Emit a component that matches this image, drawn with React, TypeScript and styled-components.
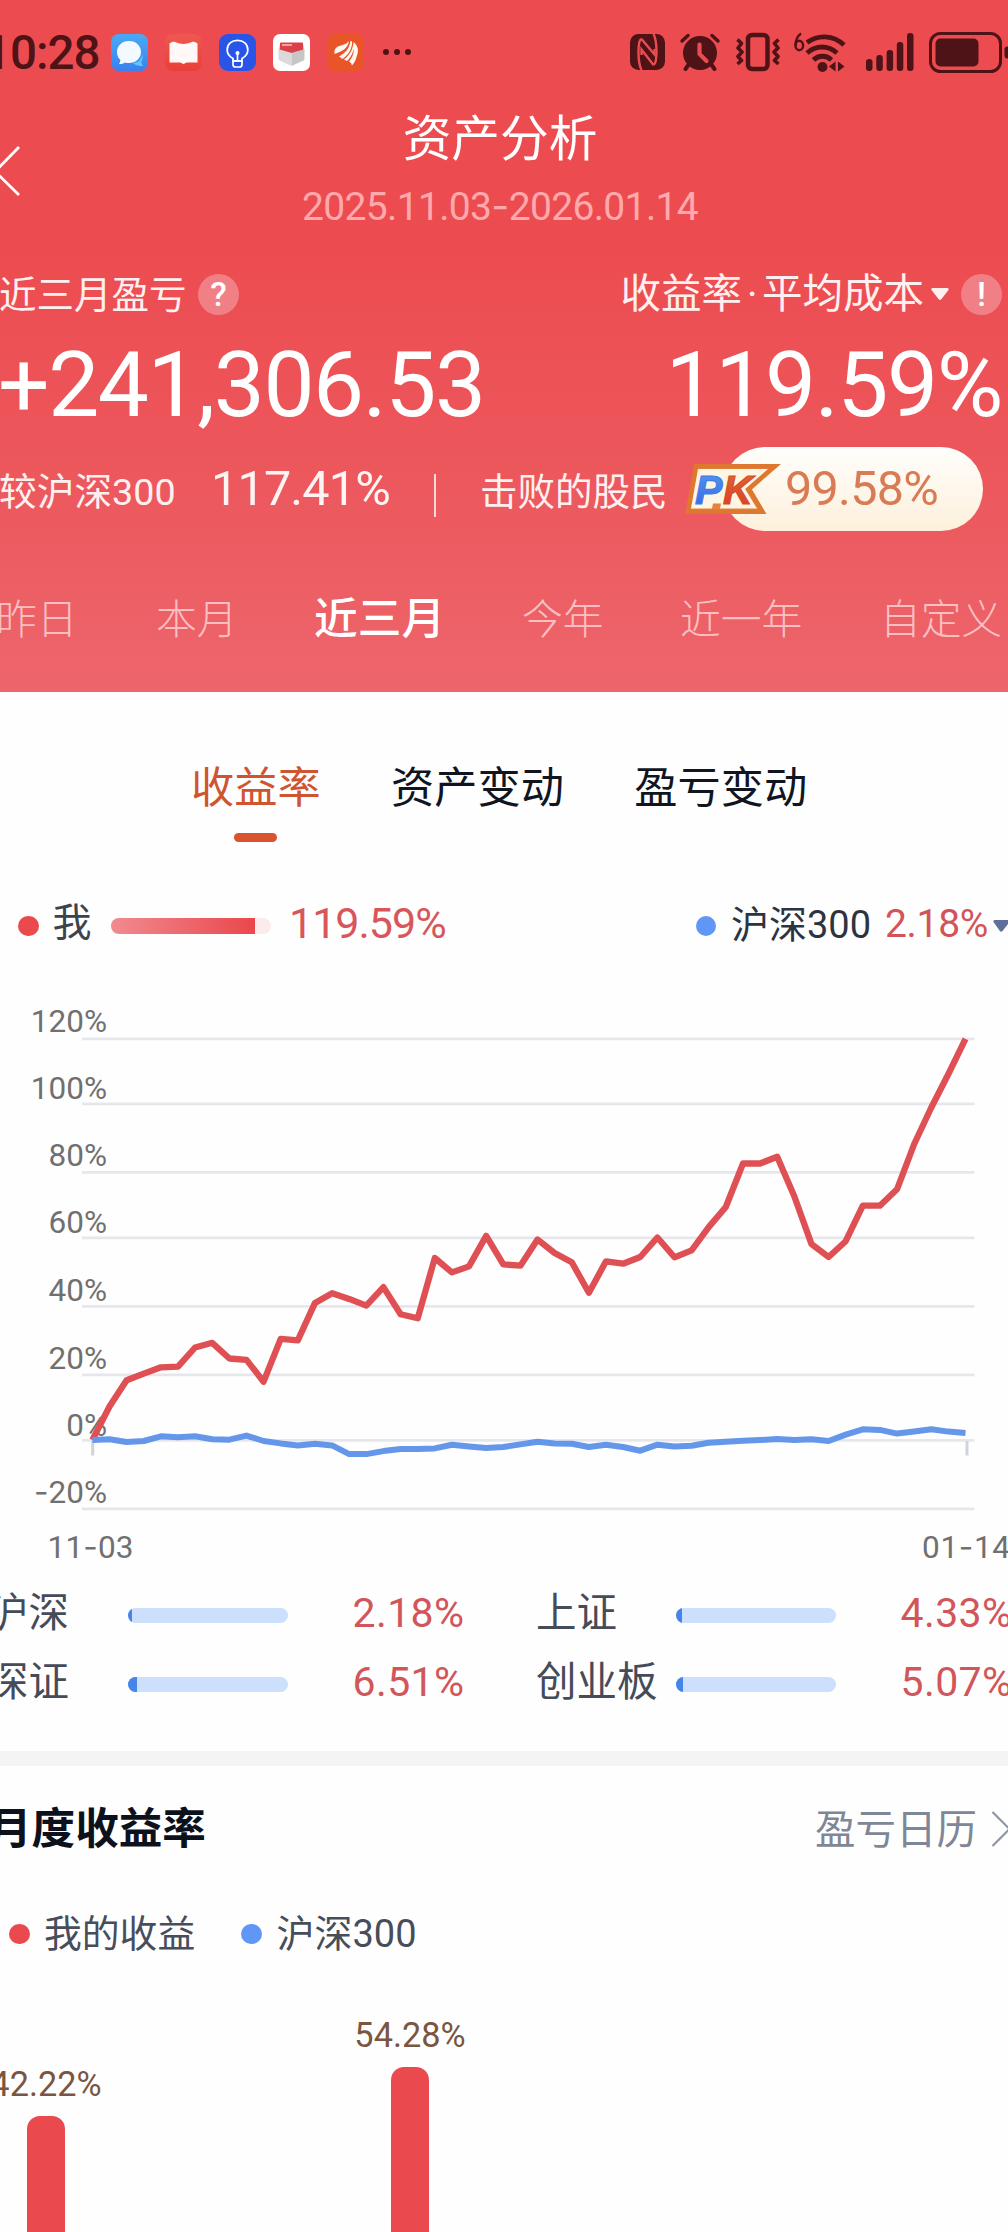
import React from "react";
import styled, { createGlobalStyle } from "styled-components";

const INK = "#4d1317";
const RED = "#ea4a4e";
const BLUE = "#6097f7";
const HEADER_TOP = "#ec4c50";

const GlobalStyle = createGlobalStyle`
  html, body { margin: 0; padding: 0; background: #fefefe; }
  * { box-sizing: border-box; }
`;

const Page = styled.main`
  width: 1008px;
  height: 2232px;
  overflow: hidden;
  background: #fefefe;
  font-family: Roboto, "Noto Sans CJK SC", sans-serif;
  white-space: nowrap;
`;

const Row = styled.div<{ $h: number }>`
  display: flex;
  align-items: center;
  height: ${(p) => p.$h}px;
`;

type TextProps = {
  $size: number;
  $w?: number;
  $color?: string;
  $weight?: number;
  $ls?: number;
  $ml?: number;
  $drop?: number;
  $lift?: number;
};

const Text = styled.span<TextProps>`
  flex: none;
  display: block;
  width: ${(p) => (p.$w ? `${p.$w}px` : "auto")};
  margin-left: ${(p) => p.$ml ?? 0}px;
  padding-top: ${(p) => p.$drop ?? 0}px;
  padding-bottom: ${(p) => p.$lift ?? 0}px;
  font-size: ${(p) => p.$size}px;
  line-height: 60px;
  font-weight: ${(p) => p.$weight ?? 400};
  letter-spacing: ${(p) => p.$ls ?? 0}px;
  color: ${(p) => p.$color ?? "inherit"};
`;

/* ---------- header ---------- */

const Header = styled.header`
  height: 692px;
  color: #fff;
  background: linear-gradient(180deg, ${HEADER_TOP} 0, #ec4c50 250px, #ec5a5f 520px, #ed666c 692px);
`;

const AppIcons = styled.div`
  display: flex;
  gap: 17px;
  margin-left: 13px;
`;

const StatusIcons = styled.div`
  display: flex;
  align-items: center;
  margin-left: auto;
  width: 378px;
  flex: none;
`;

const Glyph = styled.svg<{ $ml?: number }>`
  flex: none;
  display: block;
  overflow: visible;
  margin-left: ${(p) => p.$ml ?? 0}px;
`;

const Nav = styled.nav`
  display: flex;
  height: 146px;
  padding-right: 28px;
`;

const Back = styled.button`
  width: 20px;
  padding: 42px 0 0;
  border: 0;
  background: none;
  display: flex;
  align-items: flex-start;
`;

const TitleBlock = styled.div`
  flex: 1;
  display: flex;
  flex-direction: column;
  align-items: center;
  padding-top: 4px;
`;

const Title = styled.h1`
  margin: 0;
  font-size: 48.7px;
  font-weight: 400;
  line-height: 64px;
`;

const DateRange = styled.div`
  margin-top: 14px;
  font-size: 39px;
  line-height: 40px;
  letter-spacing: -0.65px;
  color: #ffa9ad;
`;

const Hyphen = styled.span`
  font-family: Inter, sans-serif;
`;

const Round = styled.span<{ $ml: number }>`
  flex: none;
  display: flex;
  align-items: center;
  justify-content: center;
  width: 41px;
  height: 41px;
  margin-left: ${(p) => p.$ml}px;
  border-radius: 50%;
  background: #f08085;
  font-size: 34px;
  line-height: 41px;
  font-weight: 500;
`;

const Push = styled.div<{ $pr: number }>`
  display: flex;
  align-items: center;
  margin-left: auto;
  padding-right: ${(p) => p.$pr}px;
`;

const Divider = styled.i`
  flex: none;
  width: 2px;
  height: 43px;
  margin: 13px 0 0 42px;
  background: #fbd9da;
`;

const Pill = styled.div`
  position: relative;
  flex: none;
  width: 260px;
  height: 84px;
  margin-left: 54px;
  padding: 12px 0 0 62px;
  border-radius: 42px;
  background: linear-gradient(180deg, #fffefb, #fdf0dc);
`;

const PkBadge = styled.svg`
  position: absolute;
  left: -38px;
  top: 17px;
  overflow: visible;
`;

/* ---------- body ---------- */

const SectionTabs = styled.div`
  display: flex;
  gap: 70.5px;
  padding: 67px 0 0 191px;
  height: 150px;
`;

const SectionTab = styled.div<{ $active?: boolean }>`
  display: flex;
  flex-direction: column;
  align-items: center;
  gap: 14px;
  font-size: 43.2px;
  line-height: 60px;
  color: ${(p) => (p.$active ? "#cf5430" : "#10151f")};
  &::after {
    content: "";
    width: 43px;
    height: 9px;
    border-radius: 5px;
    background: ${(p) => (p.$active ? "#d95330" : "transparent")};
  }
`;

const Dot = styled.i<{ $color: string; $ml: number }>`
  flex: none;
  width: 20.5px;
  height: 20.5px;
  margin-left: ${(p) => p.$ml}px;
  border-radius: 50%;
  background: ${(p) => p.$color};
`;

const Meter = styled.div<{ $track: string; $ml?: number; $h: number }>`
  flex: none;
  overflow: hidden;
  width: 160px;
  height: ${(p) => p.$h}px;
  margin-left: ${(p) => p.$ml ?? 0}px;
  border-radius: 8px;
  background: ${(p) => p.$track};
`;

const Fill = styled.div<{ $bg: string }>`
  height: 100%;
  background: ${(p) => p.$bg};
`;

const IndexGrid = styled.div`
  display: grid;
  grid-template-columns: 548px 548px;
  grid-template-rows: 70px 68px;
  align-items: center;
  height: 171px;
  margin-left: -12px;
`;

const IndexItem = styled.div`
  display: flex;
  align-items: center;
`;

const Band = styled.hr`
  height: 15px;
  margin: 0;
  border: 0;
  background: #f4f4f4;
`;

const Bars = styled.div`
  display: flex;
  align-items: flex-end;
  height: 254px;
  gap: 240px;
  margin-left: -16px;
`;

const BarColumn = styled.div`
  flex: none;
  display: flex;
  flex-direction: column;
  align-items: center;
  width: 124px;
  font-size: 34.3px;
  line-height: 40px;
  color: #7a5541;
`;

const Bar = styled.div`
  width: 38px;
  margin-top: 12px;
  border-radius: 13px 13px 0 0;
  background: ${RED};
`;

/* ---------- data ---------- */

const periods = [
  { label: "昨日", w: 160, ml: -4 },
  { label: "本月", w: 158, ml: 0 },
  { label: "近三月", w: 208, ml: 0, active: true },
  { label: "今年", w: 158, ml: 0 },
  { label: "近一年", w: 200, ml: 0 },
  { label: "自定义", w: 124, ml: 0 },
];

const indexes = [
  { label: "沪深", value: "2.18%", fill: 2.2 },
  { label: "上证", value: "4.33%", fill: 4 },
  { label: "深证", value: "6.51%", fill: 5.6 },
  { label: "创业板", value: "5.07%", fill: 4.6 },
];

const months = [
  { value: "42.22%", height: 116 },
  { value: "54.28%", height: 165 },
];

const grid = [
  { label: "120%", line: 28.9, base: 21.6 },
  { label: "100%", line: 93.9, base: 88.6 },
  { label: "80%", line: 162.4, base: 155.9 },
  { label: "60%", line: 227.9, base: 222.9 },
  { label: "40%", line: 296.4, base: 291.4 },
  { label: "20%", line: 364.9, base: 358.8 },
  { label: "0%", line: 430.3, base: 425.7 },
  { label: "-20%", line: 498.8, base: 492.7 },
];

const mine = [
  0, 10, 17.8, 19.8, 21.7, 21.9, 27.6, 29, 24.3, 23.9, 17.4, 30.2, 29.7, 40.9, 43.8, 42.1, 40.1, 45.6,
  37.5, 36.3, 54.3, 50, 51.8, 60.9, 52.4, 52, 59.8, 55.8, 53, 43.9, 53.3, 52.6, 54.6, 60.4, 54.5, 56.6,
  63.5, 69.5, 82.5, 82.5, 84.5, 72.7, 58.5, 54.6, 59.3, 69.9, 69.9, 74.8, 88.3, 99.2, 109.2, 119.7,
];

const benchmark = [
  0, 0.2, -0.6, -0.3, 1.1, 0.8, 1.1, 0.2, 0.1, 1.3, -0.3, -1, -1.6, -1.1, -1.6, -4.2, -4.2, -3.3, -2.7,
  -2.7, -2.5, -1.4, -1.9, -2.4, -2.1, -1.3, -0.5, -1, -1.1, -2.1, -1.4, -2.1, -3.2, -1.4, -1.9, -1.7,
  -0.8, -0.5, -0.2, 0, 0.3, 0, 0.2, -0.3, 1.6, 3.2, 3, 1.9, 2.5, 3.2, 2.5, 2.1,
];

const plot = (values: number[]) =>
  values.map((v, i) => `${(92.4 + i * 17.12).toFixed(1)},${(430 - v * 3.352).toFixed(1)}`).join(" ");

/* ---------- pieces ---------- */

function StatusBar() {
  return (
    <Row $h={104}>
      <Text $size={47.5} $weight={500} $color={INK} $ls={-1} $w={114} $ml={-16} $drop={2}>10:28</Text>
      <AppIcons>
        <Glyph width="37" height="37" viewBox="0 0 37 37">
          <defs>
            <linearGradient id="msg" x2="0" y2="1"><stop stopColor="#4aaaf4" /><stop offset="1" stopColor="#3b80ee" /></linearGradient>
          </defs>
          <rect width="37" height="37" rx="8" fill="url(#msg)" />
          <path d="M22 29c5 0 9-4 9-9 1 3 1 6-1 8l2 4c-4 0-7 0-10-3z" fill="#5bc8f8" />
          <path d="M18 7c7 0 12 4.800 12 11s-5 11-12 11c-2 0-3 0-4-.6-1.500 1-3.500 1.600-6 1.600 1-1.500 1.400-3 1.300-4.300C7 23.700 6 21.400 6 18 6 11.800 11 7 18 7z" fill="#f2faff" />
        </Glyph>
        <Glyph width="37" height="37" viewBox="0 0 37 37">
          <defs>
            <linearGradient id="book" x2="0" y2="1"><stop stopColor="#ee5850" /><stop offset="1" stopColor="#e93f38" /></linearGradient>
          </defs>
          <rect width="37" height="37" rx="8" fill="url(#book)" />
          <path d="M4.500 9.500L7 8c4-.8 5 2 11.500 2S26 7.200 30 8l2.500 1.500v19H22c-1.500 0-2.500 1.500-3.500 1.500s-2-1.500-3.500-1.500H4.500z" fill="#fff8f7" />
        </Glyph>
        <Glyph width="37" height="37" viewBox="0 0 37 37" fill="none" stroke="#fff" strokeWidth="1.700">
          <rect width="37" height="37" rx="9" fill="#2855e8" stroke="none" />
          <path d="M14 27v-2.500c-3.500-2-5.800-5-5.800-8.600C8.200 10 12.600 6.300 18.500 6.300S28.800 10 28.800 15.900c0 3.600-2.300 6.600-5.800 8.600V27z" />
          <path d="M14 27h9v3.500c0 1.500-1 2.500-2.500 2.500h-4c-1.500 0-2.500-1-2.500-2.500zM18.500 27v-8" />
          <circle cx="18.500" cy="19" r="2" fill="#fff" stroke="none" />
        </Glyph>
        <Glyph width="37" height="37" viewBox="0 0 37 37">
          <rect width="37" height="37" rx="7" fill="#fff" />
          <path d="M5.500 15l13 4v13l-12-5.500c-1-.5-1-1-1-2z" fill="#dadada" />
          <path d="M31.500 15l-13 4v13l12-5.500c1-.5 1-1 1-2z" fill="#c6c6c6" />
          <path d="M8 8.500h21c.8 0 1 .5 1 1l.5 6-12 3.500-12-3.500.5-6c0-.5.400-1 1-1z" fill="#dd4148" />
          <path d="M9 11h10" stroke="#f6c0c2" strokeWidth="1.500" />
        </Glyph>
        <Glyph width="37" height="37" viewBox="0 0 37 37" fill="#fff8f0">
          <rect width="37" height="37" rx="8" fill="#e95428" />
          <path d="M7.500 20C7 16.500 8 14 11 12.500c4-1.500 8-2 11-5.500-1 6-5 10-14.500 13z" />
          <path d="M12 22.500C19 18.500 22.500 14 23.500 7l1.500.3C25.500 14 22 20.500 15.500 25z" />
          <path d="M17 25.500C23 21 26 15 26.500 8c5 4 5.500 9 3 15-1 3.500-2 5.500-4.500 8.500-.5-2-1.500-3-3-3.700 3-4 5-8 5-13-1.500 5-3.500 9-7 12.200z" />
        </Glyph>
      </AppIcons>
      <Glyph $ml={19} width="28" height="6" viewBox="0 0 28 6" fill={INK}>
        <circle cx="3" cy="3" r="3" /><circle cx="14" cy="3" r="3" /><circle cx="25" cy="3" r="3" />
      </Glyph>
      <StatusIcons>
        <Glyph width="35" height="36" viewBox="0 0 35 36">
          <rect width="35" height="36" rx="8.500" fill={INK} />
          <g fill="none" stroke={HEADER_TOP} strokeWidth="2.400">
            <path d="M11.500 5C7.500 6 7.500 28 11.500 36M23.500 0c4 8 4 29 0 31" />
            <path d="M11.500 5L24.500 20.500V15M23.500 31L11.500 15.500V21" />
          </g>
        </Glyph>
        <Glyph $ml={15} width="40" height="38" viewBox="0 0 40 38" fill="none" stroke={INK} strokeLinecap="round">
          <circle cx="20" cy="20" r="17" fill={INK} stroke="none" />
          <path d="M2 8l6-5.500M38 8l-6-5.500" strokeWidth="3.500" />
          <path d="M9 31l-3.500 5M31 31l3.500 5" strokeWidth="4" />
          <path d="M19.500 11.500V21l7 7" stroke={HEADER_TOP} strokeWidth="4.200" />
        </Glyph>
        <Glyph $ml={15} width="46" height="38" viewBox="0 0 46 38" fill="none" stroke={INK} strokeWidth="4">
          <rect x="13" y="2" width="19.500" height="34" rx="4" strokeWidth="4.500" />
          <path d="M2.500 6.500l4 4-3.500 4.500 4 4-4 4.500 3.500 4-4 3.500M43.500 6.500l-4 4 3.500 4.500-4 4 4 4.500-3.500 4 4 3.500" strokeWidth="3.600" strokeLinejoin="round" />
        </Glyph>
        <Glyph $ml={13} width="52" height="39" viewBox="0 0 52 39" fill="none" stroke={INK}>
          <path d="M7 0.500C3.500 3 1.500 8 1.500 13" strokeWidth="2.400" />
          <ellipse cx="5.300" cy="12.500" rx="3.800" ry="4.700" strokeWidth="2.400" />
          <path d="M13 9.500c11-8 26-8 37 2.500M13 20c9-8 21-8 30 0M19.500 27c5-5 13-5 18 0" strokeWidth="4.800" />
          <circle cx="28.500" cy="34" r="5" fill={INK} stroke="none" />
          <path d="M41.500 28.500v10l-6.500-5zM44 28.500v10l6.500-5z" fill={INK} stroke="none" />
        </Glyph>
        <Glyph $ml={20} width="48" height="38" viewBox="0 0 48 38" fill={INK}>
          <rect x="0" y="26" width="6.500" height="12" rx="3" />
          <rect x="10.300" y="22" width="6.500" height="16" rx="3" />
          <rect x="20.600" y="17" width="6.500" height="21" rx="3" />
          <rect x="30.800" y="9" width="6.500" height="29" rx="3" />
          <rect x="41" y="0" width="6.500" height="38" rx="3" />
        </Glyph>
        <Glyph $ml={15} width="80" height="41" viewBox="0 0 80 41" fill={INK}>
          <rect x="1.500" y="1.500" width="70" height="38" rx="10" fill="none" stroke={INK} strokeWidth="3" />
          <rect x="6.500" y="6.500" width="43" height="28" rx="5" />
          <rect x="75.500" y="14.500" width="6" height="12" rx="3" />
        </Glyph>
      </StatusIcons>
    </Row>
  );
}

function Badge() {
  return (
    <PkBadge width="97" height="50" viewBox="0 0 97 50">
      <defs>
        <linearGradient id="pkB" x2="0" y2="1"><stop stopColor="#559af0" /><stop offset="1" stopColor="#3566e2" /></linearGradient>
        <linearGradient id="pkR" x2="0" y2="1"><stop stopColor="#d9712f" /><stop offset="1" stopColor="#dc3826" /></linearGradient>
      </defs>
      <path d="M11 2.200H90L64 25l13.500 22.700H3z" fill="#e4833c" stroke="#de7831" strokeWidth="4.500" />
      <g fontFamily="'Liberation Sans', sans-serif" fontSize="41" fontWeight="700" fontStyle="italic">
        <path d="M13 5H83L60 25l12 19.500H35l1-5h-8l-1 5H6z" fill="#fef6e4" />
        <text x="10" y="39.500" fill="url(#pkB)" stroke="#447be8" strokeWidth="1.200">P</text>
        <text x="38" y="39.500" fill="url(#pkR)" stroke="#d94a2a" strokeWidth="1.200">K</text>
      </g>
    </PkBadge>
  );
}

function ReturnChart() {
  return (
    <Glyph width="1008" height="570" viewBox="0 0 1008 570">
      {grid.map((g) => (
        <line key={g.label} x1="82" x2="974.500" y1={g.line} y2={g.line} stroke="#e6e7ec" strokeWidth="2.800" />
      ))}
      <g fill="#707070" fontSize="31.500" textAnchor="end">
        {grid.map((g) => (
          <text key={g.label} x="107" y={g.base}>
            {g.label.startsWith("-") ? <><tspan fontFamily="Inter">-</tspan>{g.label.slice(1)}</> : g.label}
          </text>
        ))}
      </g>
      <path d="M92.700 431v14.500M967 431v14.500" stroke="#cfd3da" strokeWidth="3" />
      <g fill="none" strokeLinejoin="round">
        <polyline points={plot(mine)} stroke="#df5054" strokeWidth="6.300" />
        <polyline points={plot(benchmark)} stroke="#6496ea" strokeWidth="6" />
      </g>
      <g fill="#707070" fontSize="31.500">
        <text x="47.500" y="547.800" textLength="86">11<tspan fontFamily="Inter">-</tspan>03</text>
        <text x="922" y="547.800" textLength="88">01<tspan fontFamily="Inter">-</tspan>14</text>
      </g>
    </Glyph>
  );
}

export default function App() {
  return (
    <Page>
      <GlobalStyle />
      <Header>
        <StatusBar />
        <Nav>
          <Back aria-label="返回">
            <Glyph width="20" height="50" viewBox="0 0 20 50" fill="none" stroke="#fff" strokeWidth="2.800">
              <path d="M19 1L-5 25.500L19 49" />
            </Glyph>
          </Back>
          <TitleBlock>
            <Title>资产分析</Title>
            <DateRange>2025.11.03<Hyphen>-</Hyphen>2026.01.14</DateRange>
          </TitleBlock>
        </Nav>
        <Row $h={88}>
          <Text $size={37.5} $w={187} $ml={-1} $drop={2} $color="#fff0f0">近三月盈亏</Text>
          <Round $ml={12}>?</Round>
          <Push $pr={6}>
            <Text $size={40.5} $color="#fff0f0">收益率</Text>
            <Text $size={40.5} $w={15} $ml={5} $color="#fff0f0">·</Text>
            <Text $size={40.5} $color="#fff0f0">平均成本</Text>
            <Glyph $ml={7} width="18" height="12" viewBox="0 0 18 12" fill="#fff0f0">
              <path d="M1.500 0h15c1 0 1.500 1 1 2l-7 9c-1 1.300-2 1.300-3 0l-7-9c-.5-1 0-2 1-2z" />
            </Glyph>
            <Round $ml={12}>!</Round>
          </Push>
        </Row>
        <Row $h={91}>
          <Text $size={91} $ls={-1.45} $ml={-2} $drop={2}>+241,306.53</Text>
          <Push $pr={6}><Text $size={91} $ls={-1.4} $drop={2}>119.59%</Text></Push>
        </Row>
        <Row $h={120}>
          <Text $size={37.7} $w={212} $ml={-1} $drop={5} $color="#fff0f0">较沪深300</Text>
          <Text $size={48.5} $w={181} $ls={-0.8} $color="#fff4f4">117.41%</Text>
          <Divider />
          <Text $size={37.5} $w={189} $ml={44} $drop={5} $color="#fff0f0">击败的股民</Text>
          <Pill>
            <Badge />
            <Text $size={48.5} $ls={-0.7} $color="#d97b55">99.58%</Text>
          </Pill>
        </Row>
        <Row $h={143}>
          {periods.map((p) => (
            <Text
              key={p.label}
              $size={p.active ? 43.7 : 40.8}
              $w={p.w}
              $ml={p.ml}
              $lift={p.active ? 4 : 2}
              $weight={p.active ? 500 : 300}
              $color={p.active ? "#fff" : "#fbbfc2"}
            >
              {p.label}
            </Text>
          ))}
        </Row>
      </Header>

      <SectionTabs>
        <SectionTab $active>收益率</SectionTab>
        <SectionTab>资产变动</SectionTab>
        <SectionTab>盈亏变动</SectionTab>
      </SectionTabs>

      <Row $h={168}>
        <Dot $color={RED} $ml={18} />
        <Text $size={39} $w={40} $ml={14} $lift={6} $color="#3c434f">我</Text>
        <Meter $track="#fbebec" $ml={18.5} $h={15.5}>
          <Fill $bg="linear-gradient(90deg, #f08b90, #ea474c)" style={{ width: "90%" }} />
        </Meter>
        <Text $size={43} $ml={18} $lift={7} $ls={-1} $color="#d8565b">119.59%</Text>
        <Push $pr={0}>
          <Dot $color={BLUE} $ml={0} />
          <Text $size={38} $w={154} $ml={15} $lift={3} $color="#2c3442">沪深300</Text>
          <Text $size={39} $w={108} $ls={-0.3} $lift={4} $color="#d15459">2.18%</Text>
          <Glyph width="15" height="12" viewBox="0 0 15 12" fill="#5d6f9a">
            <path d="M2 0h16L9.500 11c-.8 1-1.800 1-2.600 0L.5 2C0 1 .8 0 2 0z" />
          </Glyph>
        </Push>
      </Row>

      <ReturnChart />

      <IndexGrid>
        {indexes.map((x) => (
          <IndexItem key={x.label}>
            <Text $size={40.5} $w={140} $lift={4} $color="#454b58">{x.label}</Text>
            <Meter $track="#ccdffc" $h={15}>
              <Fill $bg="#4584e8" style={{ width: `${x.fill}%` }} />
            </Meter>
            <Text $size={41} $ml={64.5} $ls={0.4} $lift={5} $color="#d2555a">{x.value}</Text>
          </IndexItem>
        ))}
      </IndexGrid>

      <Band />

      <Row $h={124}>
        <Text $size={43.6} $weight={700} $ml={-12} $drop={3} $color="#0d111c">月度收益率</Text>
        <Push $pr={0}>
          <Text $size={40.5} $w={177} $drop={3} $color="#7f8796">盈亏日历</Text>
          <Glyph width="16" height="36" viewBox="0 0 16 36" fill="none" stroke="#8f96a3" strokeWidth="2.200">
            <path d="M0.500 2L17.500 19L0.500 36" />
          </Glyph>
        </Push>
      </Row>

      <Row $h={88}>
        <Dot $color={RED} $ml={9} />
        <Text $size={37.8} $w={197} $ml={14.5} $lift={1} $color="#474d5a">我的收益</Text>
        <Dot $color={BLUE} $ml={0} />
        <Text $size={38} $ml={15} $lift={1} $color="#474d5a">沪深300</Text>
      </Row>

      <Bars>
        {months.map((m) => (
          <BarColumn key={m.value}>
            {m.value}
            <Bar style={{ height: m.height }} />
          </BarColumn>
        ))}
      </Bars>
    </Page>
  );
}
